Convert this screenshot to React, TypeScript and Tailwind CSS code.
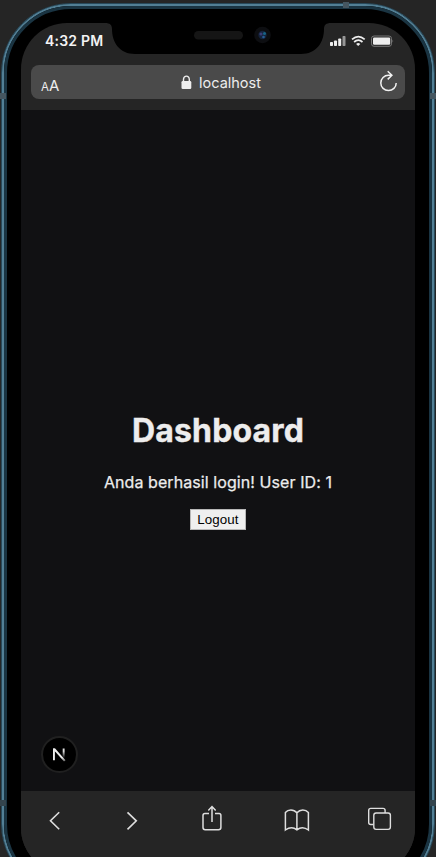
import React from "react";

const glyph = "fill-none stroke-[#dedede]";

function StatusBar() {
  return (
    <div className="relative flex h-[42px] shrink-0 items-start justify-between">
      <svg className="absolute left-0 top-0" width="394" height="42" viewBox="0 0 394 42">
        <path d="M84 0C89 0 91 2 91 6C91 20 99 31 114 31H280C295 31 303 20 303 6C303 2 305 0 310 0Z" fill="#000" />
        <rect x="173" y="8" width="49" height="8.500" rx="4.250" fill="#151515" />
        <circle cx="241.500" cy="12" r="8.300" fill="#0d0e11" />
        <circle cx="241.500" cy="12" r="4.200" fill="#14233c" />
        <circle cx="240" cy="11" r="1.600" fill="#3a3b75" />
        <circle cx="243.500" cy="10.500" r="1.500" fill="#176386" />
        <circle cx="242.500" cy="14" r="1.300" fill="#265b95" />
      </svg>
      <span className="ml-[24px] mt-[9px] whitespace-nowrap text-[14px] font-semibold leading-[18px] tracking-[0.2px] text-[#f3f3f3]">4:32 PM</span>
      <svg className="mr-[21px] mt-[11px]" width="66" height="14" viewBox="328 34 66 14">
        <g fill="#eee">
          <rect x="330" y="42" width="3" height="4" rx=".8" />
          <rect x="334" y="40.500" width="3" height="5.500" rx=".8" />
          <rect x="338.200" y="38.500" width="3" height="7.500" rx=".8" />
          <rect x="342.500" y="36" width="3" height="10" rx=".8" fill="#969696" />
          <rect x="373" y="37.500" width="17.200" height="7.300" rx="1.200" />
          <path d="M356.100 43.900Q358.200 42 360.300 43.900L358.200 46Z" />
        </g>
        <path d="M352 39.400Q358.300 33.900 364.700 39.400M354.100 42Q358.300 38.400 362.500 42" fill="none" stroke="#eee" strokeWidth="1.700" />
        <rect x="371.500" y="36" width="20" height="10.300" rx="2.500" fill="none" stroke="#777" strokeWidth="1" />
        <path d="M392.500 39.500Q394 41 392.500 42.800Z" fill="#777" />
      </svg>
    </div>
  );
}

function AddressBar() {
  return (
    <div className="mx-[10px] flex h-[34px] shrink-0 items-center justify-between rounded-[8px] bg-[#4a4a4a] text-[#ededed]">
      <div className="ml-[10px] flex w-[30px] items-baseline pt-[7px] leading-none">
        <span className="text-[11.500px]">A</span>
        <span className="text-[15px]">A</span>
      </div>
      <div className="mr-[7px] flex items-center pt-px">
        <svg className="mr-[7px]" width="11" height="15" viewBox="0 0 11 15">
          <rect x=".5" y="6" width="9.800" height="8" rx="1.300" fill="#eee" />
          <path d="M2.500 7V4.300C2.500 0 8.300 0 8.300 4.300V7" fill="none" stroke="#eee" strokeWidth="1.400" />
        </svg>
        <span className="text-[14.500px] leading-[20px]">localhost</span>
      </div>
      <svg className="mr-[6px]" width="21" height="24" viewBox="378 70 21 24">
        <path d="M391.500 75.200H388.500A7.700 7.700 0 1 0 396.200 82.900M387.700 71.200L391.900 75.200L387.700 79.400" fill="none" stroke="#f1f1f1" strokeWidth="1.500" />
      </svg>
    </div>
  );
}

function Toolbar() {
  return (
    <nav className="flex h-[83px] shrink-0 items-start bg-[#252525] pl-[27px] pt-[14px]">
      <svg width="14" height="30" viewBox="48 805 14 30" className={glyph}>
        <path d="M59.200 812.300L50.500 820.800L59.200 829.300" strokeWidth="1.600" />
      </svg>
      <svg width="14" height="30" viewBox="125 805 14 30" className={"ml-[63px] " + glyph}>
        <path d="M127.500 812.300L136.300 820.800L127.500 829.300" strokeWidth="1.600" />
      </svg>
      <svg width="22" height="30" viewBox="201 805 22 30" className={"ml-[62px] " + glyph}>
        <path d="M209 813.500H205Q203 813.500 203 815.500V827.500Q203 829.700 205.200 829.700H218.500Q220.900 829.700 220.900 827.500V815.500Q220.900 813.500 219 813.500H215M212 822V806.800M208.300 810.500L212 806.600L215.700 810.500" strokeWidth="1.500" />
      </svg>
      <svg width="26" height="30" viewBox="284 805 26 30" className={"ml-[61px] " + glyph}>
        <path d="M296.900 829.500V812.800C293.500 808.800 288 809.200 285.400 812.500V830C289.500 827 293.500 827 296.900 829.800C300.500 827 304.500 827 308.400 830V812.500C305.500 809.200 300.300 808.800 296.900 812.800" strokeWidth="1.500" />
      </svg>
      <svg width="26" height="30" viewBox="367 805 26 30" className={"ml-[57px] " + glyph}>
        <path d="M373.500 824.500H370.800Q368.700 824.500 368.700 822.500V810.500Q368.700 808.400 370.800 808.400H383Q385.100 808.400 385.100 810.500V813" strokeWidth="1.400" />
        <rect x="373.800" y="813" width="16.600" height="16.400" rx="2.300" strokeWidth="1.400" />
      </svg>
    </nav>
  );
}

export default function App() {
  return (
    <div className="relative h-[857px] w-[436px] overflow-hidden bg-[#252525] pl-px pt-[3px] font-['Inter',sans-serif]">
      <div className="h-[891px] w-[434px] rounded-[70px] border border-[#28495a] bg-black">
        <div className="h-full rounded-[69px] border-2 border-[#527f95]">
          <div className="h-full rounded-[67px] border-3 border-[#1a3442] px-[14px] pt-[14px]">
            <div className="flex h-[851px] w-[394px] flex-col overflow-hidden rounded-[46px] bg-[#252525]">
              <StatusBar />
              <AddressBar />
              <div className="h-[11px] shrink-0" />
              <main className="relative flex h-[681px] shrink-0 flex-col items-center bg-[#111113] pt-[301px] text-[#ededed]">
                <h1 className="whitespace-nowrap text-[32px] font-bold leading-[40px] tracking-[0.15px] [-webkit-text-stroke:0.4px_#ededed]">Dashboard</h1>
                <p className="mt-[19px] whitespace-nowrap text-[16px] leading-[24px] tracking-[0.08px] [-webkit-text-stroke:0.25px_#ededed]">Anda berhasil login! User ID: 1</p>
                <button className="mt-[15px] h-[21px] w-[56px] border border-[#b8b8b8] bg-[#efefef] p-0 font-['Liberation_Sans',sans-serif] text-[13.333px] leading-[19px] tracking-[0.1px] text-black">Logout</button>
                <div className="absolute left-[20px] top-[626px] flex h-[37px] w-[37px] items-center justify-center rounded-full border-2 border-[#202020] bg-black">
                  <svg className="-mt-px" width="15" height="16" viewBox="0 0 15 16">
                    <defs>
                      <linearGradient id="stem" x1="0" y1="0" x2="0" y2="1">
                        <stop offset=".3" stopColor="#ddd" />
                        <stop offset="1" stopColor="#ddd" stopOpacity="0" />
                      </linearGradient>
                      <linearGradient id="slash" x1="0" y1="0" x2="0" y2="1">
                        <stop offset=".7" stopColor="#eee" />
                        <stop offset="1" stopColor="#eee" stopOpacity=".4" />
                      </linearGradient>
                    </defs>
                    <path d="M1 2.500H3.200L13.500 14.200L12 15.400L2.900 5.200Z" fill="url(#slash)" />
                    <path d="M1 2.500H2.900V14.200H1Z" fill="#eee" />
                    <rect x="10.700" y="2.500" width="1.900" height="9.500" fill="url(#stem)" />
                  </svg>
                </div>
              </main>
              <Toolbar />
            </div>
          </div>
        </div>
      </div>
      <i className="absolute left-[343px] top-[2px] h-[6px] w-[6px] bg-[#455660]" />
      <i className="absolute left-0 top-[93px] h-[6px] w-[6px] bg-[#455660]" />
      <i className="absolute left-[430px] top-[93px] h-[6px] w-[6px] bg-[#455660]" />
      <i className="absolute left-0 top-[800px] h-[6px] w-[6px] bg-[#34444d]" />
      <i className="absolute left-[430px] top-[800px] h-[6px] w-[6px] bg-[#34444d]" />
    </div>
  );
}
